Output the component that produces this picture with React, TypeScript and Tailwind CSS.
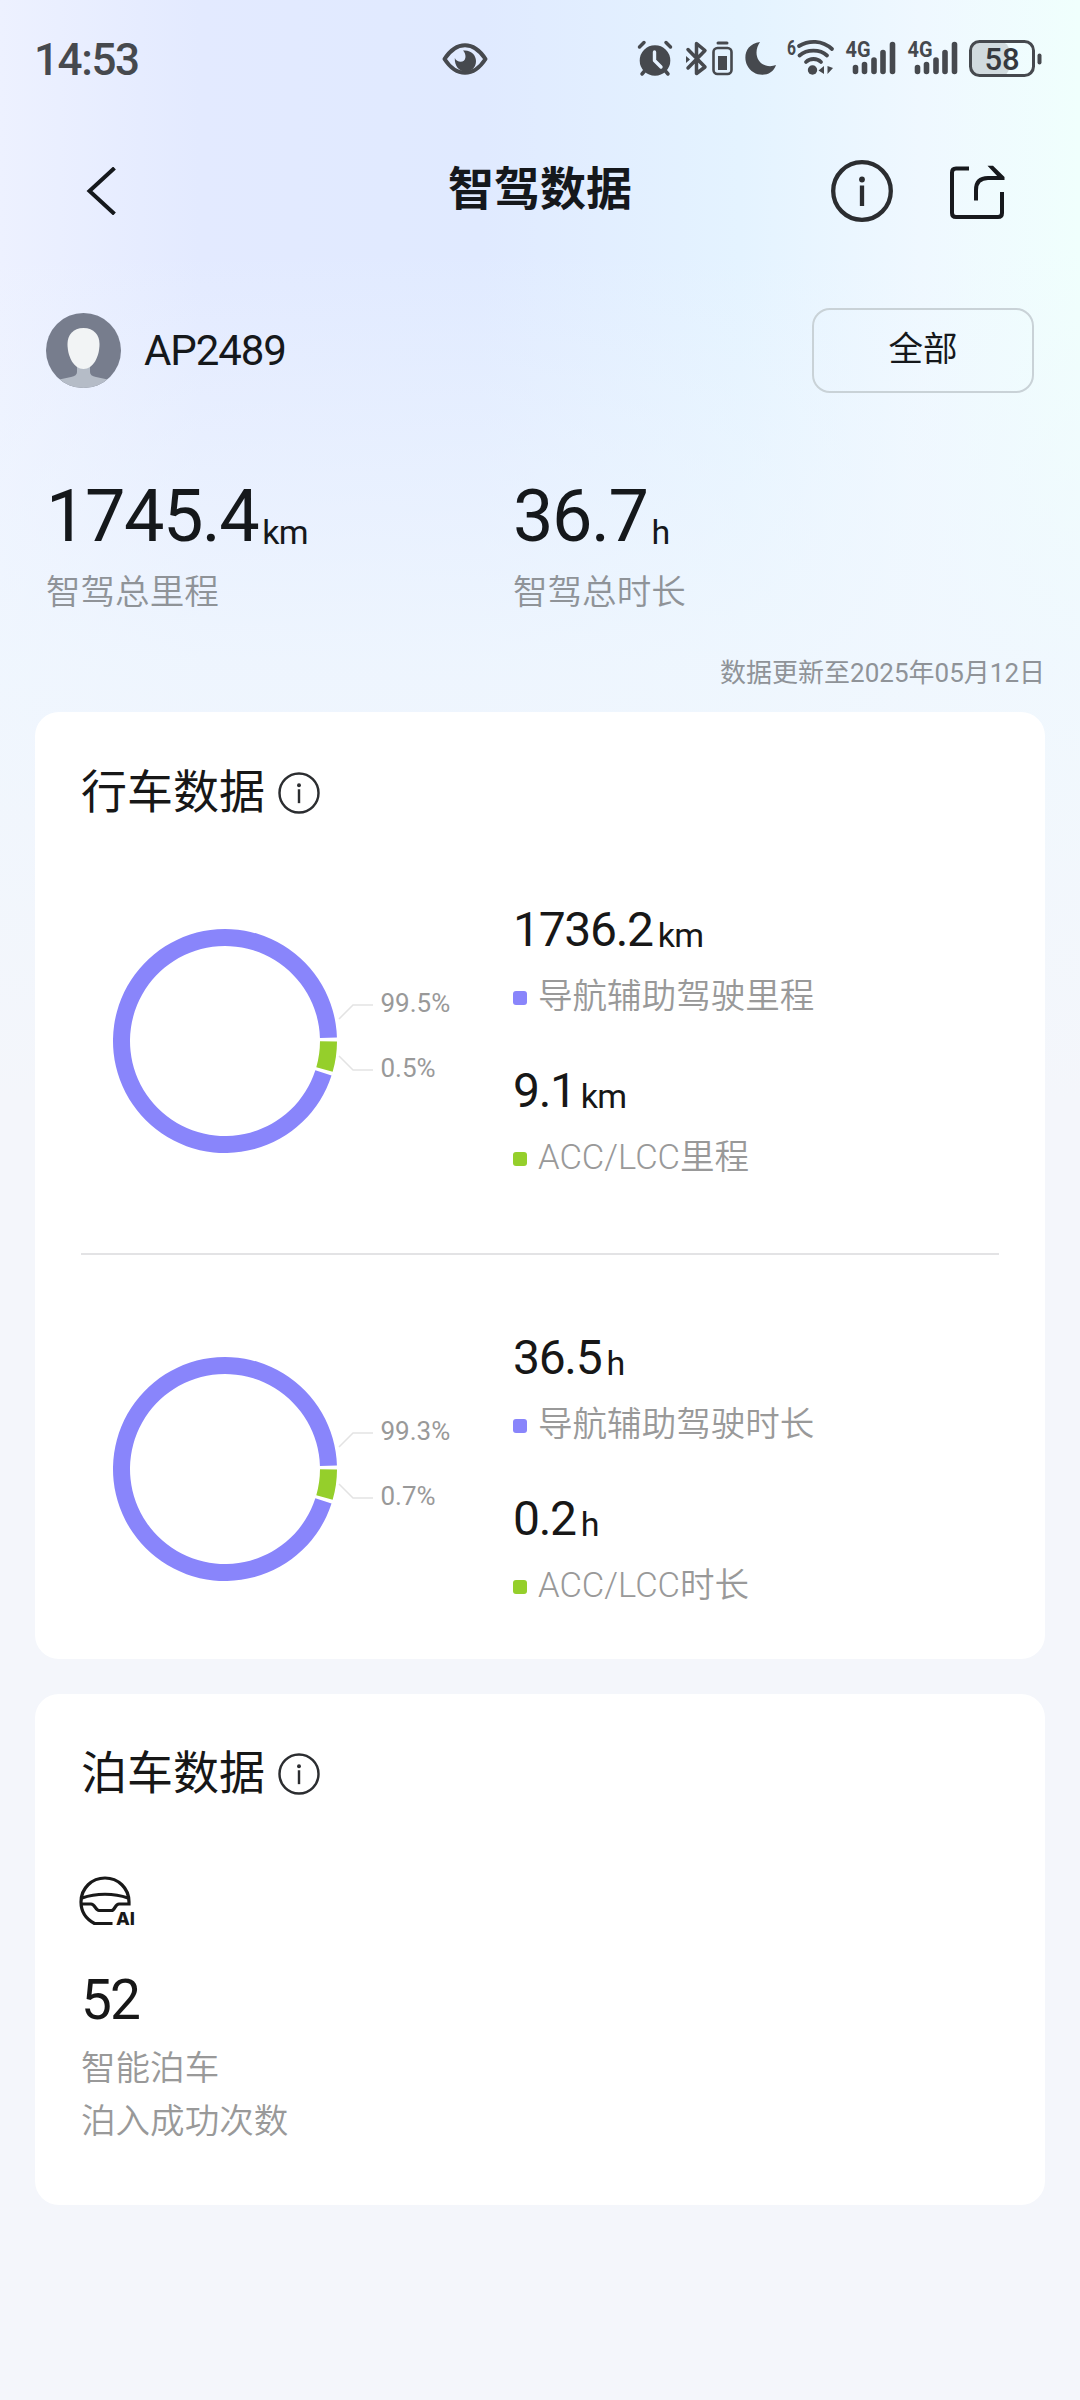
import type { ReactNode } from 'react';

const INK = '#46494e';

function StatusBar() {
  return (
    <div className="flex h-[117px] items-center pl-[34px] pr-[37px] text-[#46494e]">
      <span className="w-[408px] pt-0.5 text-[44px] font-medium leading-none tracking-[-1.4px]">14:53</span>
      <svg width="46" height="32" viewBox="0 0 46 32" fill="none">
        <path d="M2.5 16C8 7.5 15 2.2 23 2.2S38 7.5 43.5 16C38 24.5 31 29.8 23 29.8S8 24.5 2.5 16Z" stroke={INK} strokeWidth="4" strokeLinejoin="round" />
        <path d="M21 7.5C29 6.5 34 12 34 18C34 24 30 28.5 23.5 28.5C17 28.5 12.5 23 12.8 15C15 20 23 20.5 23.5 14C23.6 11 22.5 9 21 7.5Z" fill={INK} />
      </svg>
      <svg className="ml-auto overflow-visible" width="197" height="44" viewBox="0 0 197 44" fill="none" stroke={INK} strokeWidth="3.5" strokeLinecap="round" strokeLinejoin="round">
        {/* alarm */}
        <circle cx="18" cy="23.5" r="15.3" fill={INK} stroke="none" />
        <path d="M2.5 10L7 5.5M33.5 10L29 5.5M5 37L8 33.5M31 37L28 33.5" />
        <path d="M17.5 15V23.5L24 30" stroke="#e6f2ff" strokeWidth="3.4" />
        {/* bluetooth and its battery */}
        <path d="M51 12.5L68 30L59.5 36.5V6.5L68 13.5L51 31" />
        <path d="M49 19V26L53 22.5Z" fill={INK} stroke="none" />
        <rect x="76.5" y="11" width="18" height="26" rx="4" strokeWidth="2.6" />
        <path d="M81 6H90" strokeWidth="3" />
        <rect x="81" y="19" width="9" height="14" fill={INK} stroke="none" />
        {/* moon */}
        <path d="M123 5C109 7 106 19 110 28C116 41 135 41 139 28C133 30.5 125 29 121.5 23C118 17 119.5 10 123 5Z" fill={INK} stroke="none" />
        {/* wifi */}
        <text x="150" y="18" fontFamily="Roboto" fontSize="20" fontWeight="700" textLength="9" lengthAdjust="spacingAndGlyphs" fill={INK} stroke="none">6</text>
        <path d="M162 9C172 3 185 3 195 12M162.500 18.5C170 12 183 12 190 18.5M169 25C173 21 180 21 184 25" strokeWidth="3.8" />
        <circle cx="175.5" cy="33" r="4.7" fill={INK} stroke="none" />
        <path d="M187 29V37L181.5 33.5ZM190.5 29V37L196 31Z" fill={INK} stroke="none" />
      </svg>
      <Signal />
      <Signal />
      <svg className="ml-[11px]" width="74" height="38" viewBox="0 0 74 38" fill="none">
        <rect x="2" y="2" width="38" height="34" rx="8" fill={INK} fillOpacity=".18" />
        <rect x="1.5" y="1.5" width="63" height="34" rx="9" stroke={INK} strokeWidth="3" />
        <rect x="68.5" y="13.5" width="4" height="11" rx="2" fill={INK} />
        <text x="33" y="29.5" textAnchor="middle" fontFamily="Roboto" fontSize="31" fontWeight="500" fill="#36393e">58</text>
      </svg>
    </div>
  );
}

function Signal() {
  return (
    <svg className="ml-[11px] overflow-visible" width="51" height="40" viewBox="0 0 51 40" fill="none">
      <text x="0.5" y="18" fontFamily="Roboto" fontSize="22" fontWeight="700" textLength="25" lengthAdjust="spacingAndGlyphs" fill={INK}>4G</text>
      <path d="M10.5 28.5V32.5M19.5 25.5V32.5M29 21V32.5M38 13.5V32.5M47.5 5.5V32.5" stroke={INK} strokeWidth="5.6" strokeLinecap="round" />
    </svg>
  );
}

function InfoIcon({ size, stroke }: { size: number; stroke: number }) {
  return (
    <svg width={size} height={size} viewBox="0 0 62 62" fill="none" stroke="#2b2d30" strokeWidth={stroke}>
      <circle cx="31" cy="31" r="28.8" />
      <circle cx="31" cy="19.5" r="2.9" fill="#2b2d30" stroke="none" />
      <path d="M31 25.5V46" />
    </svg>
  );
}

function NavBar() {
  return (
    <div className="relative flex h-[147px] items-center pl-[86px] pr-[75px]">
      <svg width="30" height="48" viewBox="0 0 30 48" fill="none" stroke="#15181c" strokeWidth="4">
        <path d="M28.5 1L3.5 24L28.5 47" />
      </svg>
      <h1 className="absolute inset-x-0 top-[38px] text-center text-[46px] font-bold leading-[68px] text-[#15181c]">智驾数据</h1>
      <div className="ml-auto flex items-center gap-[56px]">
        <InfoIcon size={62} stroke={4.3} />
        <svg className="mt-0.5" width="56" height="56" viewBox="0 0 56 56" fill="none" stroke="#17191d" strokeWidth="4">
          <path d="M20 4.5H7Q3 4.5 3 8.5V49Q3 53 7 53H49Q53 53 53 49V28" />
          <path d="M27 36.500V26Q27 14 39 14H52.5" />
          <path d="M38.5 1.8H44L55.5 13V16H48L50 14Z" fill="#17191d" stroke="none" />
        </svg>
      </div>
    </div>
  );
}

function Avatar() {
  return (
    <svg width="75" height="75" viewBox="0 0 75 75">
      <clipPath id="face">
        <circle cx="37.5" cy="37.5" r="37.5" />
      </clipPath>
      <g clipPath="url(#face)">
        <rect width="75" height="75" fill="#777d8d" />
        <path d="M31 53H44V59Q44 63 50 64L64 67V75H11V67L25 64Q31 63 31 59Z" fill="#b5bcc7" />
        <path d="M37.5 15C48 15 53.5 22 53.5 31C53.5 44 47 56 37.5 56S21.5 44 21.5 31C21.5 22 27 15 37.5 15Z" fill="#f2f4f5" />
      </g>
    </svg>
  );
}

function Total({ value, unit, label }: { value: string; unit: string; label: string }) {
  return (
    <div>
      <div className="flex h-[84px] items-baseline text-[#15181b]">
        <span className="text-[72px] leading-[84px] tracking-[-1.5px]">{value}</span>
        <span className="relative top-[3px] ml-1 text-[34px] tracking-[-0.8px]">{unit}</span>
      </div>
      <p className="mt-[7px] text-[34.56px] leading-[52px] text-[#8f9398] font-[350]">{label}</p>
    </div>
  );
}

function point(r: number, deg: number) {
  const a = (deg * Math.PI) / 180;
  return `${(r * Math.cos(a)).toFixed(2)} ${(r * Math.sin(a)).toFixed(2)}`;
}

function sector(from: number, to: number) {
  const large = to - from > 180 ? 1 : 0;
  return `M${point(112, from)}A112 112 0 ${large} 1 ${point(112, to)}L${point(95, to)}A95 95 0 ${large} 0 ${point(95, from)}Z`;
}

function Donut({ major, minor }: { major: string; minor: string }) {
  return (
    <svg className="shrink-0" width="400" height="226" viewBox="-144 -113 400 226">
      <path d={sector(18, 358.2)} fill="#8985fb" />
      <path d={sector(0.2, 16)} fill="#95cf2b" />
      <path d="M114 -22L128 -36H148M114 15L128 29H148" fill="none" stroke="#e3e3e3" strokeWidth="1.5" />
      <g fontFamily="Roboto" fontSize="26" fill="#999999">
        <text x="155.5" y="-29">{major}</text>
        <text x="155.5" y="35.5">{minor}</text>
      </g>
    </svg>
  );
}

function Metric({ value, unit, dot, label }: { value: string; unit: string; dot: string; label: string }) {
  return (
    <div className="h-[161px]">
      <div className="flex h-[58px] items-baseline text-[#171717]">
        <span className="text-[48px] leading-[58px] tracking-[-1.3px]">{value}</span>
        <span className="relative top-px ml-[5px] text-[34px] tracking-[-0.8px]">{unit}</span>
      </div>
      <div className="mt-[12px] flex h-[52px] items-center text-[34.56px] font-[350] text-[#999999]">
        <span className={`mr-[11px] mt-px size-[14px] rounded-[3px] ${dot}`} />
        {label}
      </div>
    </div>
  );
}

function ChartRow({ major, minor, children }: { major: string; minor: string; children: ReactNode }) {
  return (
    <div className="flex h-[322px]">
      <div className="w-[432px] pt-[27px]">
        <Donut major={major} minor={minor} />
      </div>
      <div>{children}</div>
    </div>
  );
}

function CardTitle({ children }: { children: ReactNode }) {
  return (
    <div className="flex h-[68px] items-center gap-[13px] text-[46px] leading-[68px] text-[#171717]">
      <h2>{children}</h2>
      <div className="mt-[2px]">
        <InfoIcon size={42} stroke={3.6} />
      </div>
    </div>
  );
}

function ParkingIcon() {
  return (
    <svg className="-ml-[2px] overflow-visible" width="58" height="50" viewBox="0 0 58 50" fill="none" stroke="#191919" strokeWidth="3.2">
      <path d="M33.5 47.5H15.5C7 43 2 35 2 26C2 12 13 2 26 2S50 12 50 26V28H40C36 28 36 34.5 32.5 34.5H20C16.5 34.5 16 28 12 28H2.5" />
      <path d="M3 22C17 17 35 17 49 22" />
      <text x="37" y="49" fontFamily="Inter" fontSize="18" fontWeight="800" fill="#191919" stroke="none">AI</text>
    </svg>
  );
}

export default function App() {
  return (
    <div
      className="h-[2400px] w-[1080px] overflow-hidden bg-[#f4f6fb] font-['Roboto','Noto_Sans_CJK_SC',sans-serif]"
      lang="zh-CN"
    >
      <div className="h-[2400px] bg-[linear-gradient(to_bottom,rgba(240,248,255,0)_0px,rgba(240,248,255,0)_250px,rgba(240,247,254,0.85)_660px,#f4f6fb_1100px),linear-gradient(to_right,#edf1ff_0px,#e3eaff_200px,#e0eaff_480px,#e4f3ff_740px,#eff8ff_920px,#f0fffd_1080px)]">
        <StatusBar />
        <NavBar />

        <div className="flex h-[173px] items-center pl-[46px] pr-[46px]">
          <Avatar />
          <span className="ml-[23px] text-[42px] leading-none tracking-[-1.1px] text-[#15181b]">AP2489</span>
          <button className="ml-auto h-[85px] w-[222px] rounded-[18px] border-2 border-[#c9d2d7] pb-0.5 text-[34.56px] text-[#15181b]">
            全部
          </button>
        </div>

        <div className="flex h-[203px] pl-[46px] pt-[38px]">
          <div className="w-[467px]">
            <Total value="1745.4" unit="km" label="智驾总里程" />
          </div>
          <Total value="36.7" unit="h" label="智驾总时长" />
        </div>

        <p className="h-[72px] pr-[35px] pt-[13px] text-right text-[26px] leading-[40px] text-[#8f9398]">
          数据更新至2025年05月12日
        </p>

        <div className="mx-[35px] h-[947px] rounded-[24px] bg-white px-[46px] pt-[46px]">
          <CardTitle>行车数据</CardTitle>
          <div className="pt-[75px]">
            <ChartRow major="99.5%" minor="0.5%">
              <Metric value="1736.2" unit="km" dot="bg-[#8985fb]" label="导航辅助驾驶里程" />
              <Metric value="9.1" unit="km" dot="bg-[#95cf2b]" label="ACC/LCC里程" />
            </ChartRow>
          </div>
          <div className="mt-[30px] h-[2px] bg-[#e3e3e5]" />
          <div className="pt-[74px]">
            <ChartRow major="99.3%" minor="0.7%">
              <Metric value="36.5" unit="h" dot="bg-[#8985fb]" label="导航辅助驾驶时长" />
              <Metric value="0.2" unit="h" dot="bg-[#95cf2b]" label="ACC/LCC时长" />
            </ChartRow>
          </div>
        </div>

        <div className="mx-[35px] mt-[35px] h-[511px] rounded-[24px] bg-white px-[46px] pt-[45px]">
          <CardTitle>泊车数据</CardTitle>
          <div className="mt-[69px]">
            <ParkingIcon />
          </div>
          <p className="mt-[41px] text-[55px] leading-[66px] tracking-[-1.8px] text-[#171717]">52</p>
          <p className="mt-[9px] text-[34.56px] font-[350] leading-[52.5px] text-[#999999]">
            智能泊车
            <br />
            泊入成功次数
          </p>
        </div>
      </div>
    </div>
  );
}
